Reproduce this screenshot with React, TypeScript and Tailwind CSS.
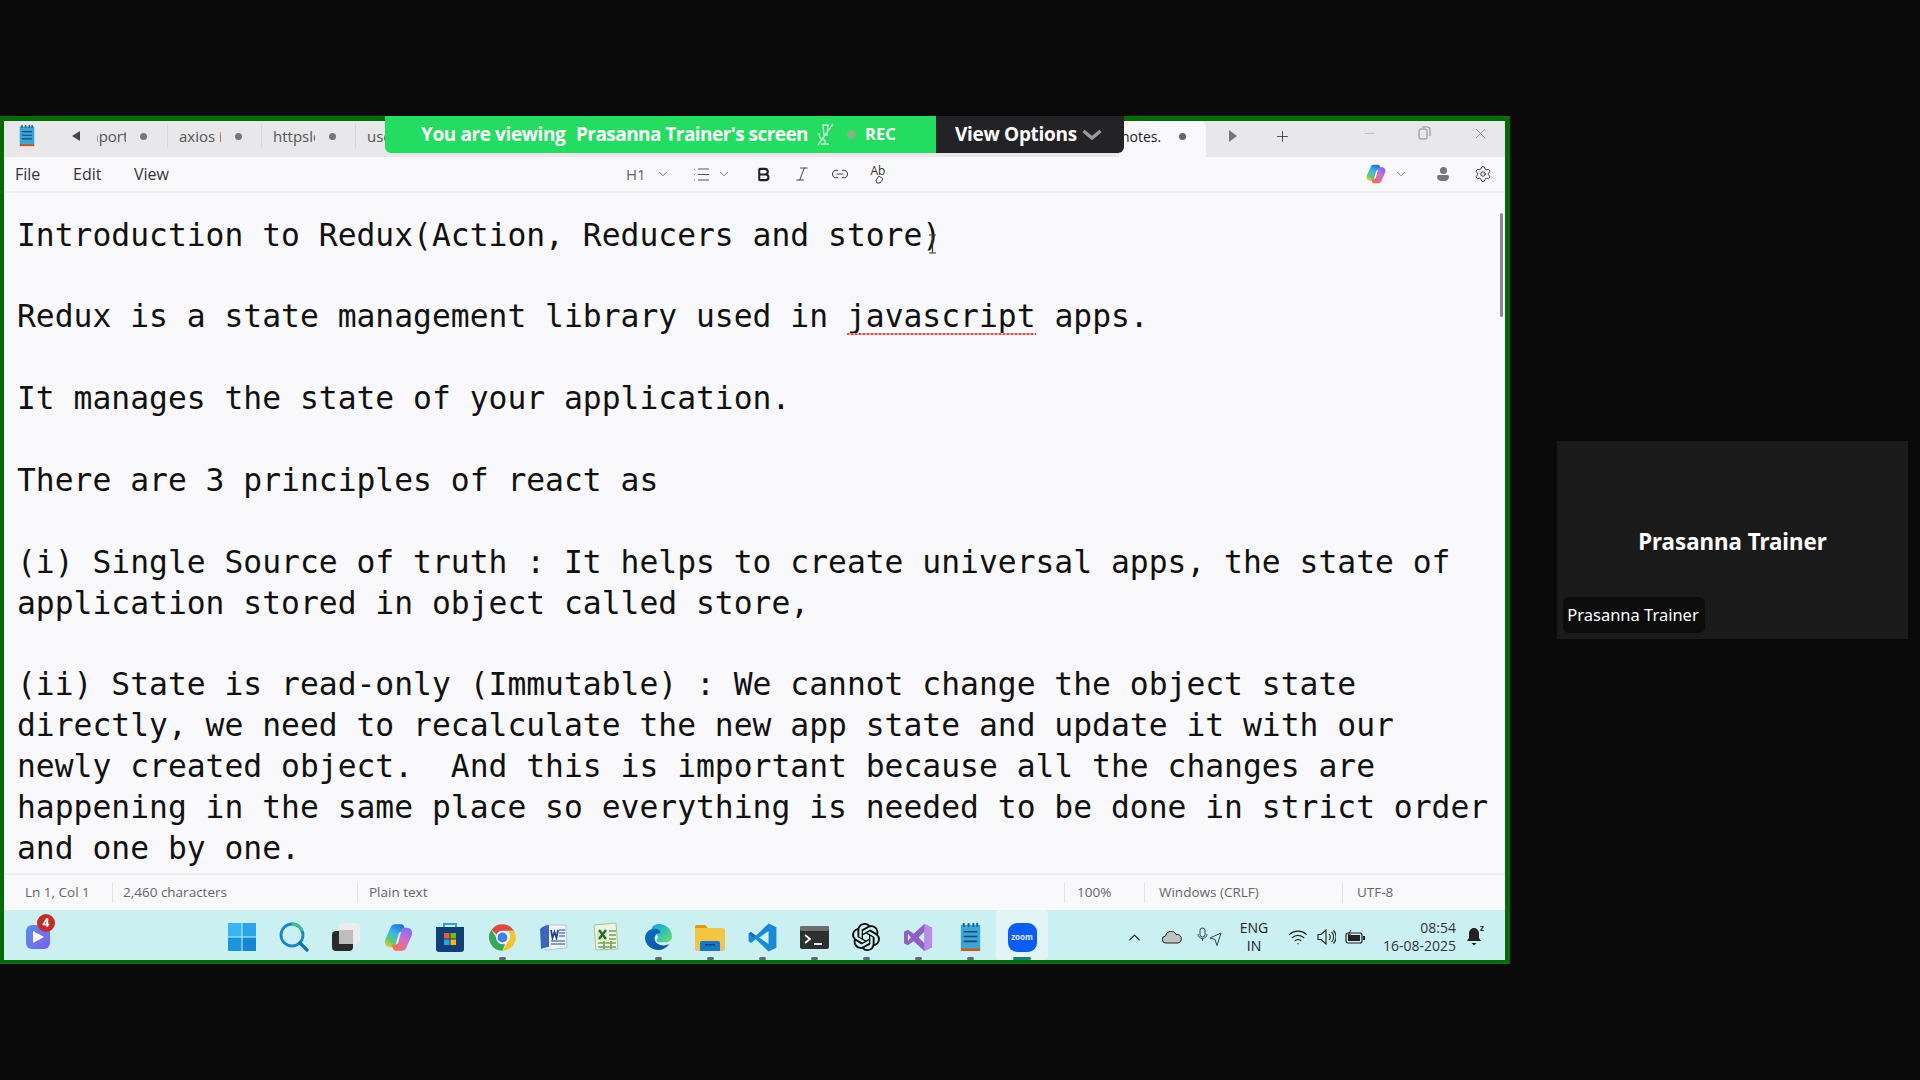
import {
  Bold,
  ChevronDown,
  ChevronUp,
  Italic,
  Link2,
  List,
  Minus,
  Plus,
  Settings,
  Wifi,
  X,
} from "lucide-react";
import { SiOpenai } from "react-icons/si";
import type { ReactNode } from "react";

const ui = "font-['Open_Sans','Noto_Sans',sans-serif]";

const noteLines = [
  "Introduction to Redux(Action, Reducers and store)",
  "",
  "SPELL",
  "",
  "It manages the state of your application.",
  "",
  "There are 3 principles of react as",
  "",
  "(i) Single Source of truth : It helps to create universal apps, the state of",
  "application stored in object called store,",
  "",
  "(ii) State is read-only (Immutable) : We cannot change the object state",
  "directly, we need to recalculate the new app state and update it with our",
  "newly created object.  And this is important because all the changes are",
  "happening in the same place so everything is needed to be done in strict order",
  "and one by one.",
];

function NotepadIcon({ w = 16, h = 24 }: { w?: number; h?: number }) {
  return (
    <svg width={w} height={h} viewBox="0 0 22 30">
      <rect x="1" y="2" width="20" height="24" fill="#3aa6d8" />
      <rect x="1" y="26" width="20" height="3" fill="#b5622f" />
      <path d="M4 0v4M9 0v4M14 0v4M18 0v4" stroke="#1b5f86" strokeWidth="2" />
      <path d="M4 9h14M4 14h14M4 19h14" stroke="#124a70" strokeWidth="1.6" />
    </svg>
  );
}

function Tab({ label, width, dot = true }: { label: string; width: number; dot?: boolean }) {
  return (
    <div className="flex h-[24px] shrink-0 items-center border-r border-[#d8d7da] pl-[11px]" style={{ width }}>
      <span className="w-[42px] overflow-hidden text-[15px] whitespace-nowrap text-[#555]">{label}</span>
      {dot && <span className="ml-[14px] size-[7px] rounded-full bg-[#777]" />}
    </div>
  );
}

function TitleBar() {
  return (
    <div className={`flex h-[36px] items-center bg-[#e8e7ea] pb-[6px] ${ui}`}>
      <div className="ml-[15px] flex w-[16px] justify-center">
        <NotepadIcon />
      </div>
      <svg className="ml-[36px]" width="10" height="12" viewBox="0 0 10 12">
        <path d="M9 1v10L1 6z" fill="#444" />
      </svg>
      <div className="ml-[16px] flex h-[24px] w-[71px] items-center border-r border-[#d8d7da]">
        <span className="w-[29px] overflow-hidden text-[15px] whitespace-nowrap text-[#555]">
          <span className="-ml-[16px] inline-block">import</span>
        </span>
        <span className="ml-[14px] size-[7px] rounded-full bg-[#777]" />
      </div>
      <Tab label="axios i" width={94} />
      <Tab label="httpslc" width={94} />
      <div className="ml-[11px] w-[40px] text-[15px] text-[#555]">use</div>
      <div className="-mb-[6px] ml-[712px] flex h-[36px] w-[87px] items-center rounded-t-md bg-[#f9f8fb] pb-[6px] pl-[2px]">
        <span className="text-[14px] text-[#222]">notes.</span>
        <span className="ml-[18px] size-[7px] rounded-full bg-[#666]" />
      </div>
      <svg className="ml-[23px]" width="8" height="12" viewBox="0 0 8 12">
        <path d="M0 0v12l8-6z" fill="#777" />
      </svg>
      <Plus className="ml-[37px] text-[#444]" size={17} strokeWidth={1.3} />
      <Minus className="mb-[6px] ml-[71px] text-[#aaa]" size={15} strokeWidth={1} />
      <svg className="mb-[6px] ml-[41px]" width="13" height="14" viewBox="0 0 13 14" fill="none" stroke="#888">
        <rect x="1" y="3" width="8" height="10" rx="1.5" />
        <path d="M4 1h5.5A2.5 2.5 0 0 1 12 3.500V10" />
      </svg>
      <X className="mb-[6px] ml-[41px] text-[#777]" size={17} strokeWidth={1} />
    </div>
  );
}

function CopilotIcon({ size = 20 }: { size?: number }) {
  return (
    <svg width={size} height={size} viewBox="0 0 24 24">
      <defs>
        <linearGradient id="cpa" x1="0.7" y1="0" x2="0.2" y2="1">
          <stop offset="0" stopColor="#1f6fd6" />
          <stop offset="0.4" stopColor="#35b8ea" />
          <stop offset="0.75" stopColor="#5ecb6e" />
          <stop offset="1" stopColor="#f2c230" />
        </linearGradient>
        <linearGradient id="cpb" x1="0.8" y1="0" x2="0.2" y2="1">
          <stop offset="0" stopColor="#7f6cf0" />
          <stop offset="0.5" stopColor="#d76bd0" />
          <stop offset="1" stopColor="#f5713f" />
        </linearGradient>
      </defs>
      <path d="M9 1h5c1.300 0 2.200.6 2.600 1.800L18 7h-3c-1.500 0-2.500.8-3 2.300L9.500 18c-.4 1.300-1.500 2-2.800 2H5c-3.300 0-5-3-4-6.200L5.500 3.500C6 2 7.300 1 9 1z" fill="url(#cpa)" />
      <path d="M15 23h-5c-1.300 0-2.200-.6-2.600-1.800L6.500 18h2.500c1.500 0 2.500-.8 3-2.300L14.500 6c.4-1.300 1.500-2 2.800-2H19c3.300 0 5 3 4 6.200l-4.500 10.300C18 22 16.700 23 15 23z" fill="url(#cpb)" />
    </svg>
  );
}

function MenuBar() {
  return (
    <div className={`flex h-[36px] items-center border-b-2 border-[#efeef1] bg-[#f9f8fb] text-[#333] ${ui}`}>
      <span className="ml-[11px] w-[58px] text-[16px]">File</span>
      <span className="w-[61px] text-[16px]">Edit</span>
      <span className="w-[492px] text-[16px]">View</span>
      <span className="w-[30px] text-[15px] text-[#666]">H1</span>
      <ChevronDown className="text-[#666]" size={14} strokeWidth={1.5} />
      <List className="ml-[22px] text-[#555]" size={19} strokeWidth={1.3} />
      <ChevronDown className="ml-[6px] text-[#666]" size={14} strokeWidth={1.5} />
      <Bold className="ml-[24px] text-[#222]" size={17} strokeWidth={3} />
      <Italic className="ml-[21px] text-[#444]" size={18} strokeWidth={1.3} />
      <Link2 className="ml-[20px] text-[#444]" size={18} strokeWidth={1.5} />
      <div className="relative ml-[20px] flex h-[20px] w-[18px] items-start justify-center">
        <span className="text-[12px] leading-[13px] text-[#333]">Ab</span>
        <svg className="absolute bottom-0 left-[5px]" width="11" height="9" viewBox="0 0 11 9" fill="none" stroke="#444">
          <path d="M2 5l3-4 4 3-3 4H3z" />
        </svg>
      </div>
      <div className="ml-[479px]">
        <CopilotIcon />
      </div>
      <ChevronDown className="ml-[8px] text-[#777]" size={14} strokeWidth={1.5} />
      <div className="ml-[28px] flex w-[14px] flex-col items-center">
        <span className="size-[7px] rounded-full bg-[#777]" />
        <span className="mt-[1px] h-[6px] w-[12px] rounded-t-[2px] rounded-b-[5px] bg-[#777]" />
      </div>
      <Settings className="ml-[24px] text-[#333]" size={18} strokeWidth={1.3} />
    </div>
  );
}

function Editor() {
  return (
    <div className="relative h-[680px] overflow-hidden bg-[#f9f8fb] pt-[21.5px] pl-[13px] font-['DejaVu_Sans_Mono',monospace] text-[31.33px] leading-[40.9px] text-[#111]">
      {noteLines.map((line, i) =>
        line === "SPELL" ? (
          <div key={i} className="h-[40.900px] whitespace-pre">
            Redux is a state management library used in{" "}
            <span className="relative">
              javascript
              <span className="absolute right-0 -bottom-[1px] left-0 h-[2px] bg-[repeating-linear-gradient(90deg,#e5484d_0,#e5484d_2px,#f4a6a8_2px,#f4a6a8_4px)]" />
            </span>{" "}
            apps.
          </div>
        ) : (
          <div key={i} className="h-[40.900px] whitespace-pre">
            {line}
          </div>
        ),
      )}
      {/* text cursor over the closing bracket */}
      <svg className="absolute top-[41px] left-[923px]" width="11" height="20" viewBox="0 0 11 20" fill="none" stroke="#333" strokeWidth="1.200">
        <path d="M2 1h7M5.500 1v18M2 19h7" />
      </svg>
      <div className="absolute top-[20px] right-[2px] h-[104px] w-[3px] rounded-full bg-[#8a8a8c]" />
    </div>
  );
}

function StatusCell({ width, pad = 11, children }: { width: number; pad?: number; children: ReactNode }) {
  return (
    <div className="flex h-[20px] shrink-0 items-center border-l border-[#e2e1e4]" style={{ width, paddingLeft: pad }}>
      {children}
    </div>
  );
}

function StatusBar() {
  return (
    <div className={`flex h-[37px] items-center border-t-2 border-[#efeef1] bg-[#f9f8fb] pl-[21px] text-[13.5px] text-[#666] ${ui}`}>
      <div className="w-[87px]">Ln 1, Col 1</div>
      <StatusCell width={245} pad={10}>
        2,460 characters
      </StatusCell>
      <StatusCell width={707}>Plain text</StatusCell>
      <StatusCell width={80} pad={12}>
        100%
      </StatusCell>
      <StatusCell width={198} pad={14}>
        Windows (CRLF)
      </StatusCell>
      <StatusCell width={100} pad={14}>
        UTF-8
      </StatusCell>
    </div>
  );
}

function AppCell({ children, dot, active }: { children: ReactNode; dot?: boolean; active?: boolean }) {
  return (
    <div className={`relative flex h-[50px] w-[52px] shrink-0 items-center justify-center rounded-sm pt-[4px] ${active ? "bg-[#e3f4f7]" : ""}`}>
      {children}
      {dot && <span className="absolute bottom-[0px] h-[3px] w-[7px] rounded-full bg-[#667]" />}
      {active && <span className="absolute bottom-[0px] h-[3px] w-[18px] rounded-full bg-[#1f7d74]" />}
    </div>
  );
}

function TaskbarApps() {
  return (
    <div className="ml-[164px] flex items-center">
      <AppCell>
        <svg width="30" height="30" viewBox="0 0 30 30">
          <path d="M1 1h13.500v13.500H1z" fill="#38b6f1" />
          <path d="M15.500 1H29v13.500H15.500z" fill="#2aa5ea" />
          <path d="M1 15.500h13.500V29H1z" fill="#1a94de" />
          <path d="M15.500 15.500H29V29H15.500z" fill="#1486d4" />
        </svg>
      </AppCell>
      <AppCell>
        <svg width="30" height="30" viewBox="0 0 30 30" fill="none">
          <circle cx="13" cy="13" r="11" stroke="#1a86c8" strokeWidth="2.800" />
          <path d="M13 2a11 11 0 0 1 10 7" stroke="#36c48a" strokeWidth="2.800" />
          <path d="M21 21l7 7" stroke="#136fb0" strokeWidth="3.200" strokeLinecap="round" />
        </svg>
      </AppCell>
      <AppCell>
        <div className="relative size-[28px]">
          <div className="absolute top-0 right-0 size-[21px] rounded-sm bg-[#ececec]" />
          <div className="absolute bottom-0 left-0 h-[20px] w-[21px] rounded-sm bg-[#2a2a2a]" />
          <div className="absolute top-[7px] left-[7px] size-[14px] bg-[#bdbdbd]" />
        </div>
      </AppCell>
      <AppCell>
        <CopilotIcon size={29} />
      </AppCell>
      <AppCell>
        <svg width="28" height="30" viewBox="0 0 28 30">
          <path d="M8 5V2h12v3" fill="none" stroke="#2aa5d8" strokeWidth="2" />
          <path d="M0 5h28v22a3 3 0 0 1-3 3H3a3 3 0 0 1-3-3z" fill="#113f78" />
          <rect x="8" y="11" width="5.500" height="5.500" fill="#f05a28" />
          <rect x="14.500" y="11" width="5.500" height="5.500" fill="#7fba00" />
          <rect x="8" y="17.500" width="5.500" height="5.500" fill="#26a5e4" />
          <rect x="14.500" y="17.500" width="5.500" height="5.500" fill="#fdb900" />
        </svg>
      </AppCell>
      <AppCell dot>
        <svg width="29" height="29" viewBox="0 0 48 48">
          <path d="M24 2a22 22 0 0 1 19 11H24a11 11 0 0 0-10 6L6 11A22 22 0 0 1 24 2z" fill="#e0483b" />
          <path d="M43 13a22 22 0 0 1-19 33l9-16a11 11 0 0 0 0-17z" fill="#f7c325" />
          <path d="M24 46A22 22 0 0 1 6 11l9 16a11 11 0 0 0 13 8z" fill="#3aa757" />
          <circle cx="24" cy="24" r="9.500" fill="#3c7ff0" stroke="#fff" strokeWidth="2.500" />
        </svg>
      </AppCell>
      <AppCell>
        <svg width="30" height="30" viewBox="0 0 30 30">
          <path d="M6 3h21l1 23-22 2z" fill="#f1f5fb" stroke="#b5c4de" />
          <path d="M1 7c3-3 7-4 9-4v22c-3 0-6 1-8 2z" fill="#3a68b8" />
          <path d="M12 8l1.500 8 2-6 2 6L19 8" fill="none" stroke="#22458f" strokeWidth="1.800" />
          <path d="M20 8h6M20 11h6M20 14h6M12 19h14M12 22h14" stroke="#5f80c0" strokeWidth="1.300" />
        </svg>
      </AppCell>
      <AppCell>
        <svg width="30" height="30" viewBox="0 0 30 30">
          <path d="M3 3l22-2 2 26-22 1z" fill="#eef4e3" stroke="#a9c48f" />
          <path d="M6 9c3-1 8-1 10 0v9H6z" fill="#d8e8c4" />
          <path d="M8 8l7 9M15 8l-7 9" stroke="#2b6b2d" strokeWidth="2.400" />
          <path d="M18 9h7M18 13h7M18 17h7M7 21h18M7 25h18M13 19v8M20 19v8" stroke="#6fa65a" strokeWidth="1.700" />
        </svg>
      </AppCell>
      <AppCell dot>
        <svg width="29" height="29" viewBox="0 0 30 30">
          <defs>
            <linearGradient id="edgea" x1="0" y1="0" x2="1" y2="1">
              <stop offset="0" stopColor="#1f9fdc" />
              <stop offset="0.5" stopColor="#2fc4b0" />
              <stop offset="1" stopColor="#7bdc5e" />
            </linearGradient>
            <linearGradient id="edgeb" x1="0" y1="0" x2="1" y2="1">
              <stop offset="0" stopColor="#0f6fc0" />
              <stop offset="1" stopColor="#0a4f9e" />
            </linearGradient>
          </defs>
          <path d="M15 1c8 0 14 6 14 13 0 4-3 6-7 6h-6c-2 0-3-1-3-2 0-1 1-2 2-3-1-3-3-5-6-5C6 5 10 1 15 1z" fill="url(#edgea)" />
          <path d="M1 15C2 8 7 6 11 6c4 0 6 2 6 4-4 0-6 3-6 6 0 5 6 8 11 7l4-1c-3 4-7 6-11 6C7 28 1 22 1 15z" fill="url(#edgeb)" />
        </svg>
      </AppCell>
      <AppCell dot>
        <svg width="30" height="27" viewBox="0 0 30 27">
          <path d="M0 3a2 2 0 0 1 2-2h8l3 3h15a2 2 0 0 1 2 2v19a2 2 0 0 1-2 2H2a2 2 0 0 1-2-2z" fill="#f4c542" />
          <path d="M0 3a2 2 0 0 1 2-2h8l3 3H0z" fill="#d99b17" />
          <path d="M5 27v-8a2 2 0 0 1 2-2h16a2 2 0 0 1 2 2v8z" fill="#1478c8" />
          <rect x="10" y="20" width="10" height="1.500" fill="#0b3f73" />
        </svg>
      </AppCell>
      <AppCell dot>
        <svg width="29" height="29" viewBox="0 0 100 100">
          <path d="M71 2l27 13v70L71 98 27 56 10 69 2 64V36l8-5 17 13z" fill="#1a8ad4" />
          <path d="M71 28L38 50l33 22z" fill="#cbf0f1" />
          <path d="M2 36l8-5 17 13-9 6z" fill="#0f6fb0" />
        </svg>
      </AppCell>
      <AppCell dot>
        <svg width="29" height="23" viewBox="0 0 29 23">
          <rect width="29" height="23" rx="2" fill="#2f2f2f" />
          <rect width="29" height="5" rx="2" fill="#6e6e6e" />
          <path d="M5 9l5 4-5 4" fill="none" stroke="#fff" strokeWidth="1.800" />
          <path d="M14 18h8" stroke="#fff" strokeWidth="1.800" />
        </svg>
      </AppCell>
      <AppCell dot>
        <SiOpenai size={28} color="#0b0b0b" />
      </AppCell>
      <AppCell dot>
        <svg width="29" height="29" viewBox="0 0 30 30">
          <path d="M21 1l8 4v20l-8 4-11-10-6 4-4-2V9l4-2 6 4z" fill="#8e5fc4" />
          <path d="M21 1l8 4v20l-8 4z" fill="#b88ce6" />
          <path d="M21 9l-6 6 6 6z" fill="#cbf0f1" />
          <path d="M4 11v8l3-4z" fill="#cbf0f1" />
        </svg>
      </AppCell>
      <AppCell dot>
        <NotepadIcon w={23} h={29} />
      </AppCell>
      <AppCell active>
        <div className="flex size-[29px] items-center justify-center rounded-[9px] bg-[#0b5cff] text-[8px] font-bold text-[#dfe8ff]">zoom</div>
      </AppCell>
    </div>
  );
}

function Tray() {
  return (
    <div className={`mt-[4px] ml-[77px] flex items-center text-[#222] ${ui}`}>
      <ChevronUp size={19} strokeWidth={1.6} />
      <svg className="ml-[18px]" width="20" height="13" viewBox="0 0 20 13">
        <path d="M4 12a3.500 3.500 0 0 1-.5-7A5.500 5.500 0 0 1 14 3.500 4.300 4.300 0 0 1 16 12z" fill="#bfc2c2" stroke="#222" />
      </svg>
      <svg className="ml-[15px]" width="25" height="20" viewBox="0 0 25 20" fill="none" stroke="#2b4a55" strokeWidth="1">
        <rect x="3" y="1" width="5" height="9" rx="2.500" />
        <path d="M1 7a4.500 4.500 0 0 0 9 0M5.500 11.500V14" />
        <path d="M24 6l-11 5 5 1.500 2 6z" />
      </svg>
      <div className="ml-[12px] w-[40px] text-center text-[14px] leading-[18px]">
        ENG
        <br />
        IN
      </div>
      <Wifi className="ml-[14px]" size={20} strokeWidth={1.4} />
      <svg className="ml-[9px]" width="19" height="16" viewBox="0 0 19 16" fill="none" stroke="#222" strokeWidth="1.100">
        <path d="M1 5.500h3L9 1v14l-5-4.500H1z" />
        <path d="M12 5a4 4 0 0 1 0 6M14.500 3a7 7 0 0 1 0 10M16.500 1.500a9.500 9.500 0 0 1 0 13" />
      </svg>
      <svg className="ml-[9px]" width="20" height="14" viewBox="0 0 20 14">
        <rect x="1" y="3" width="16" height="10" rx="2" fill="none" stroke="#222" strokeWidth="1.200" />
        <rect x="3" y="5" width="12" height="6" fill="#222" />
        <rect x="18" y="6" width="2" height="4" fill="#222" />
        <path d="M6 0L3 5h3L4 8" fill="none" stroke="#222" />
      </svg>
      <div className="ml-[1px] w-[90px] text-right text-[14px] leading-[18px] text-[#333]">
        08:54
        <br />
        16-08-2025
      </div>
      <div className="relative ml-[10px] h-[20px] w-[17px]">
        <svg width="16" height="19" viewBox="0 0 16 19">
          <path d="M8 1c3 0 5 2.500 5 5.500V11l2 3H1l2-3V6.500C3 3.500 5 1 8 1z" fill="#222" />
          <path d="M5.500 16h5L8 18.500z" fill="#222" />
        </svg>
        <span className="absolute -top-[3px] -right-[1px] text-[8px] leading-none font-bold">z</span>
      </div>
    </div>
  );
}

function Taskbar() {
  return (
    <div className="flex h-[50px] items-center bg-[#cbf0f1] pl-[22px]">
      <div className="relative mt-[4px] size-[24px] rounded-[6px] bg-gradient-to-br from-[#4f8ff0] to-[#7a5cf0]">
        <svg className="absolute top-[6px] left-[7px]" width="11" height="12" viewBox="0 0 11 12">
          <path d="M0 0v12l11-6z" fill="#fff" />
        </svg>
        <span className={`absolute -top-[11px] left-[11px] flex size-[18px] items-center justify-center rounded-full bg-[#c62a25] text-[12px] font-bold text-white ${ui}`}>4</span>
      </div>
      <div className="ml-[2px]">
        <TaskbarApps />
      </div>
      <Tray />
    </div>
  );
}

function ZoomBar() {
  return (
    <div className="absolute top-[116px] left-[385px] flex h-[37px] font-['Open_Sans',sans-serif] text-white">
      <div className="flex w-[551px] items-center rounded-bl-md bg-[#22dd60] pl-[36px]">
        <span className="text-[19px] font-bold tracking-[-0.4px] whitespace-pre">You are viewing </span>
        <span className="ml-[6px] text-[19px] font-bold tracking-[-0.55px] whitespace-pre">Prasanna Trainer's screen</span>
        <svg className="ml-[8px]" width="19" height="23" viewBox="0 0 19 23" fill="none" stroke="#c5f3d4" strokeWidth="1.300">
          <path d="M7 2h5l-1 10H8zM3 10c0 4 2 7 6 7M9 17v4M5 21h8M17 1L2 22" />
        </svg>
        <span className="ml-[12px] size-[9px] rounded-full bg-[#86b47f]" />
        <span className="ml-[9px] text-[16.5px] font-bold">REC</span>
      </div>
      <div className="flex w-[188px] items-center rounded-br-md bg-[#232326] pl-[19px]">
        <span className="text-[19px] font-bold tracking-[-0.3px]">View Options</span>
        <svg className="ml-[5px]" width="20" height="12" viewBox="0 0 20 12" fill="none" stroke="#9a9a9c" strokeWidth="3.500">
          <path d="M1.500 2l8.500 7 8.500-7" />
        </svg>
      </div>
    </div>
  );
}

function ParticipantTile() {
  return (
    <div className="relative mt-[441px] ml-[47px] h-[198px] w-[351px] bg-[#1a1a1a] font-['Noto_Sans',sans-serif] text-white">
      <div className="flex h-[198px] items-center justify-center pt-[4px] text-[22.3px] font-bold">Prasanna Trainer</div>
      <div className="absolute bottom-[6px] left-[6px] flex h-[36px] w-[142px] items-center justify-center rounded-md bg-[#0c0c0c] pr-[2px] text-[16.5px]">
        Prasanna Trainer
      </div>
    </div>
  );
}

export default function App() {
  return (
    <div className="relative flex h-[1080px] w-[1920px] overflow-hidden bg-[#0a0a0a]">
      <div className="mt-[116px] h-[848px] w-[1510px] shrink-0 border-[5px] border-b-4 border-l-4 border-[#036b03]">
        <TitleBar />
        <MenuBar />
        <Editor />
        <StatusBar />
        <Taskbar />
      </div>
      <ParticipantTile />
      <ZoomBar />
    </div>
  );
}
